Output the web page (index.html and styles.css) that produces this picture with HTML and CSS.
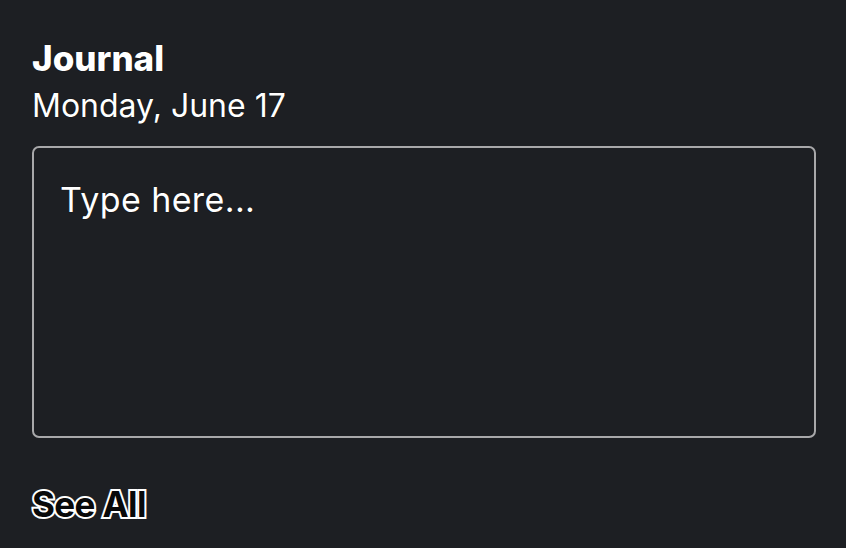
FILE: index.html
```html
<!DOCTYPE html>
<html lang="en">
<head>
<meta charset="utf-8">
<title>Journal</title>
<link rel="stylesheet" href="styles.css">
</head>
<body>
<main class="card">
  <h1 class="title">Journal</h1>
  <p class="date">Monday, June 17</p>
  <div class="entry">
    <span class="placeholder">Type here...</span>
  </div>
  <a class="see-all" href="#">See All</a>
</main>
</body>
</html>
```
FILE: styles.css
```css
html, body {
  margin: 0;
  padding: 0;
  background: #1d1f23;
}
body {
  font-family: "Inter", "Noto Sans", sans-serif;
  color: #ffffff;
}
.card {
  display: flex;
  flex-direction: column;
  padding: 41px 30px 0 32px;
  height: 548px;
  box-sizing: border-box;
}
.title {
  margin: 0;
  font-size: 35px;
  font-weight: 800;
  line-height: 34px;
  letter-spacing: 0;
  text-shadow: 0 0 1px #000;
}
.date {
  margin: 15px 0 0;
  font-size: 32px;
  font-weight: 400;
  line-height: 32px;
  text-shadow: 0 0 1px #000;
}
.entry {
  margin-top: 24px;
  height: 292px;
  box-sizing: border-box;
  border: 2px solid #a8a8aa;
  border-radius: 7px;
  padding: 35px 26px;
}
.placeholder {
  display: block;
  font-size: 34px;
  line-height: 34px;
  letter-spacing: 0.4px;
  text-shadow: 0 0 1px #000;
}
.see-all {
  margin-top: 49px;
  align-self: flex-start;
  font-size: 35px;
  font-weight: 700;
  letter-spacing: -0.6px;
  line-height: 34px;
  color: #08090a;
  text-decoration: none;
  -webkit-text-stroke: 4px #ffffff;
  paint-order: stroke fill;
}
```
